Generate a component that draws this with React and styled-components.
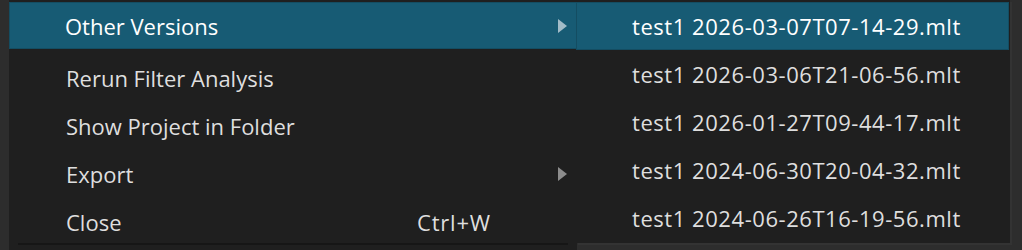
import styled, { createGlobalStyle } from 'styled-components';

const GlobalStyle = createGlobalStyle`
  html, body {
    margin: 0;
    padding: 0;
    background: #2d2d2d;
    overflow: hidden;
  }
  body {
    font-family: 'Open Sans', 'Noto Sans', sans-serif;
  }
`;

const StyledScreen = styled.div`
  display: flex;
  align-items: flex-start;
  height: 250px;
  padding-left: 9px;
`;

const StyledMenu = styled.div`
  width: 568px;
  height: 260px;
  padding-top: 2px;
  box-sizing: border-box;
  background: #1f1f1f;
  display: flex;
  flex-direction: column;
`;

const StyledSubmenu = styled.div`
  width: 434px;
  height: 243px;
  margin-left: -1px;
  padding: 2px 1px 0 0;
  box-sizing: border-box;
  background: #1f1f1f;
  display: flex;
  flex-direction: column;
  box-shadow: 2px 2px 0 #333333;
`;

const StyledItem = styled.div`
  display: flex;
  align-items: center;
  height: ${(p) => p.$height || 48}px;
  padding-left: ${(p) => p.$indent}px;
  padding-right: 9px;
  box-sizing: border-box;
  font-size: 22px;
  letter-spacing: ${(p) => p.$spacing || 0}px;
  color: ${(p) => (p.$active ? '#ffffff' : '#dedede')};
  background: ${(p) => (p.$active ? '#175b74' : 'transparent')};
  border: 1px solid ${(p) => (p.$active ? '#144d62' : 'transparent')};
  white-space: nowrap;
`;

const StyledLabel = styled.span`
  flex: 1;
`;

const StyledShortcut = styled.span`
  width: 150px;
  letter-spacing: 0.8px;
`;

const StyledArrow = styled.span`
  width: 0;
  height: 0;
  border-top: 7px solid transparent;
  border-bottom: 7px solid transparent;
  border-left: 9px solid ${(p) => (p.$active ? '#a3bcc8' : '#8c8c8c')};
`;

const StyledGap = styled.div`
  height: 5px;
`;

const StyledSeparator = styled.div`
  height: 2px;
  margin: -3px 9px 0 9px;
  background: #161616;
`;

const menuItems = [
  { label: 'Rerun Filter Analysis' },
  { label: 'Show Project in Folder' },
  { label: 'Export', submenu: true },
  { label: 'Close', shortcut: 'Ctrl+W' },
];

const versions = [
  'test1 2026-03-07T07-14-29.mlt',
  'test1 2026-03-06T21-06-56.mlt',
  'test1 2026-01-27T09-44-17.mlt',
  'test1 2024-06-30T20-04-32.mlt',
  'test1 2024-06-26T16-19-56.mlt',
];

export default function App() {
  return (
    <>
      <GlobalStyle />
      <StyledScreen>
        <StyledMenu>
          <StyledItem $active $indent={55} $height={47}>
            <StyledLabel>Other Versions</StyledLabel>
            <StyledArrow $active />
          </StyledItem>
          <StyledGap />
          {menuItems.map((item) => (
            <StyledItem key={item.label} $indent={56}>
              <StyledLabel>{item.label}</StyledLabel>
              {item.shortcut && <StyledShortcut>{item.shortcut}</StyledShortcut>}
              {item.submenu && <StyledArrow />}
            </StyledItem>
          ))}
          <StyledSeparator />
        </StyledMenu>
        <StyledSubmenu>
          {versions.map((name, i) => (
            <StyledItem key={name} $active={i === 0} $indent={55} $spacing={0.55}>
              <StyledLabel>{name}</StyledLabel>
            </StyledItem>
          ))}
        </StyledSubmenu>
      </StyledScreen>
    </>
  );
}
